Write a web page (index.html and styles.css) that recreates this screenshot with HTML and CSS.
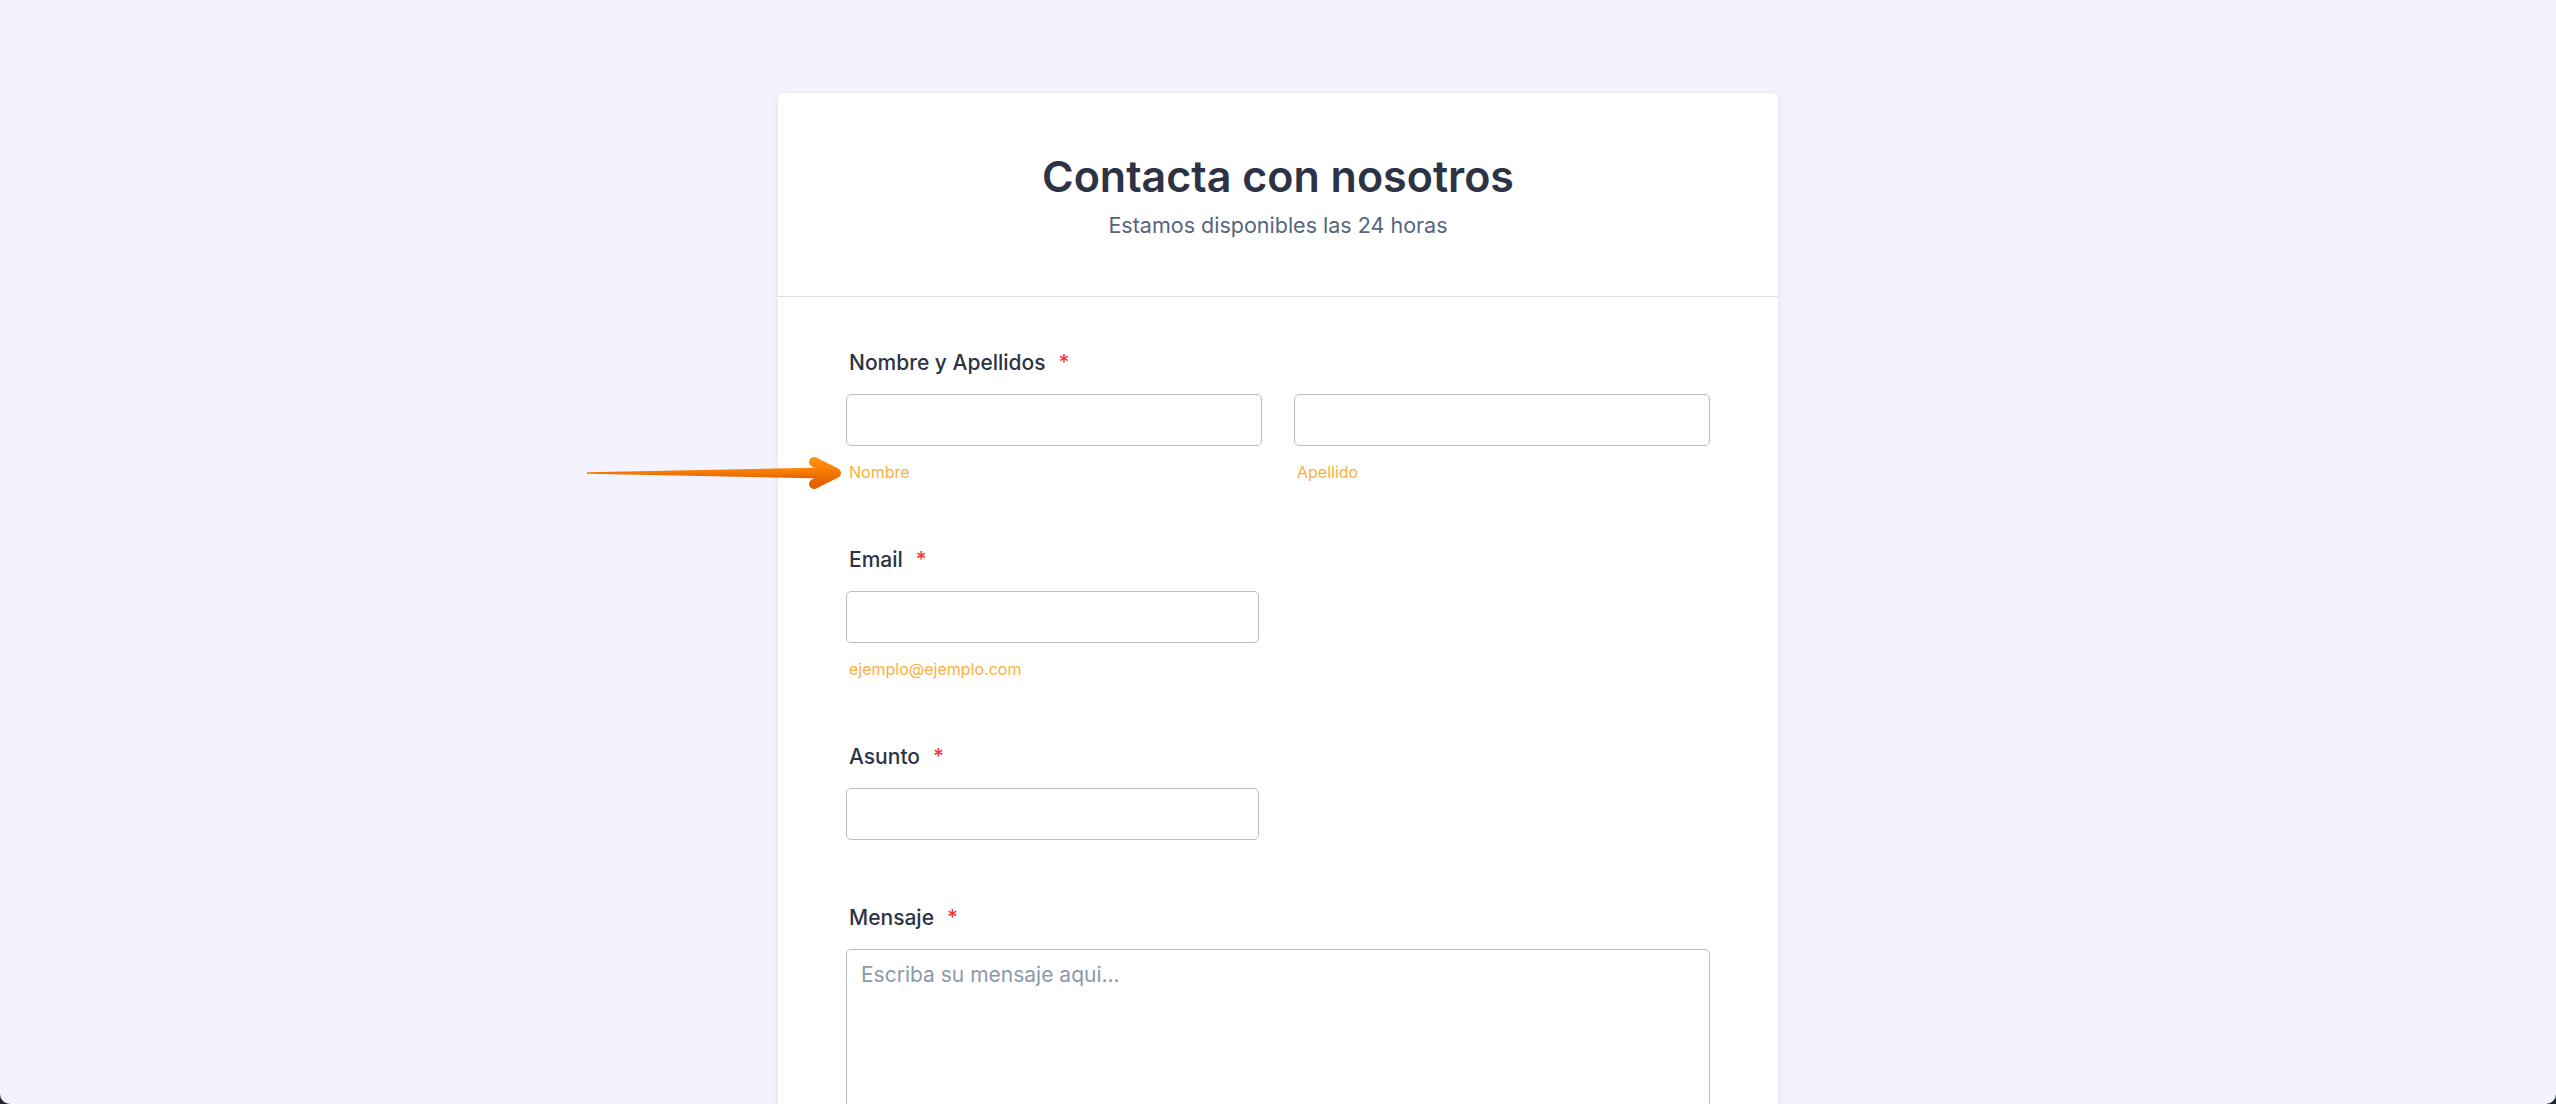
FILE: index.html
```html
<!DOCTYPE html>
<html lang="es">
<head>
<meta charset="utf-8">
<title>Contacta con nosotros</title>
<link rel="stylesheet" href="styles.css">
</head>
<body>
<div class="page">
  <form class="card">
    <header class="card-header">
      <h1 class="title">Contacta con nosotros</h1>
      <p class="subtitle">Estamos disponibles las 24 horas</p>
    </header>
    <div class="card-body">
      <div class="field">
        <label class="label">Nombre y Apellidos<span class="req">*</span></label>
        <div class="row">
          <div class="col">
            <input class="input" type="text">
            <span class="sublabel">Nombre</span>
          </div>
          <div class="col">
            <input class="input" type="text">
            <span class="sublabel">Apellido</span>
          </div>
        </div>
      </div>
      <div class="field">
        <label class="label">Email<span class="req">*</span></label>
        <div class="col narrow">
          <input class="input" type="email">
          <span class="sublabel">ejemplo@ejemplo.com</span>
        </div>
      </div>
      <div class="field">
        <label class="label">Asunto<span class="req">*</span></label>
        <div class="col narrow">
          <input class="input" type="text">
        </div>
      </div>
      <div class="field">
        <label class="label">Mensaje<span class="req">*</span></label>
        <textarea class="textarea" placeholder="Escriba su mensaje aqui..."></textarea>
      </div>
    </div>
  </form>
  <svg class="arrow" width="270" height="46" viewBox="0 0 270 46" xmlns="http://www.w3.org/2000/svg">
    <defs>
      <linearGradient id="ag" x1="0" y1="0" x2="0" y2="1">
        <stop offset="0" stop-color="#ff8c0a"/>
        <stop offset="1" stop-color="#e56200"/>
      </linearGradient>
    </defs>
    <path d="M7 22.3 L242 17.5 L256 23 L242 28.5 L7 23.7 Z" fill="url(#ag)"/>
    <path d="M234 12 L256 23 L234 34" fill="none" stroke="url(#ag)" stroke-width="10" stroke-linecap="round" stroke-linejoin="round"/>
  </svg>
</div>
</body>
</html>
```
FILE: styles.css
```css
html {
  background: #1c2634;
}
body {
  margin: 0;
  height: 1104px;
  overflow: hidden;
  background: #f3f3fe;
  border-radius: 0 0 10px 10px;
  font-family: Inter, "Noto Sans", sans-serif;
}
.page {
  position: relative;
  padding-top: 93px;
}
.card {
  width: 1000px;
  margin: 0 auto;
  background: #ffffff;
  border-radius: 6px;
  box-shadow: 0 2px 6px rgba(87, 100, 126, 0.14);
}
.card-header {
  padding: 58px 40px 58px;
  border-bottom: 1px solid #dcdde7;
  text-align: center;
}
.title {
  margin: 0;
  font-size: 43px;
  line-height: 51px;
  font-weight: 600;
  color: #2c3345;
}
.subtitle {
  margin: 10px 0 0;
  font-size: 21.5px;
  line-height: 26px;
  color: #57647e;
}
.card-body {
  padding: 53px 68px 40px;
  display: flex;
  flex-direction: column;
  gap: 65px;
}
.field {
  display: flex;
  flex-direction: column;
}
.label {
  padding-left: 3px;
  font-size: 21px;
  line-height: 26px;
  font-weight: 500;
  color: #2c3345;
  margin-bottom: 18px;
}
.req {
  color: #f23a3c;
  margin-left: 13px;
}
.row {
  display: flex;
  gap: 32px;
}
.col {
  display: flex;
  flex-direction: column;
  flex: 1;
}
.col.narrow {
  width: 413px;
  flex: none;
}
.input {
  box-sizing: border-box;
  height: 52px;
  width: 100%;
  margin: 0;
  border: 1px solid #b9bdca;
  border-radius: 5px;
  background: #ffffff;
  font-family: inherit;
  font-size: 20px;
}
.sublabel {
  margin-top: 16px;
  padding-left: 3px;
  font-size: 16px;
  line-height: 20px;
  color: #f9b040;
}
.textarea {
  box-sizing: border-box;
  width: 100%;
  height: 320px;
  margin: 0;
  padding: 12px 14px;
  border: 1px solid #b9bdca;
  border-radius: 5px;
  font-family: inherit;
  font-size: 21px;
  line-height: 25px;
  color: #2c3345;
  resize: none;
}
.textarea::placeholder {
  color: #8f97ab;
}
.arrow {
  position: absolute;
  left: 580px;
  top: 450px;
}
```
